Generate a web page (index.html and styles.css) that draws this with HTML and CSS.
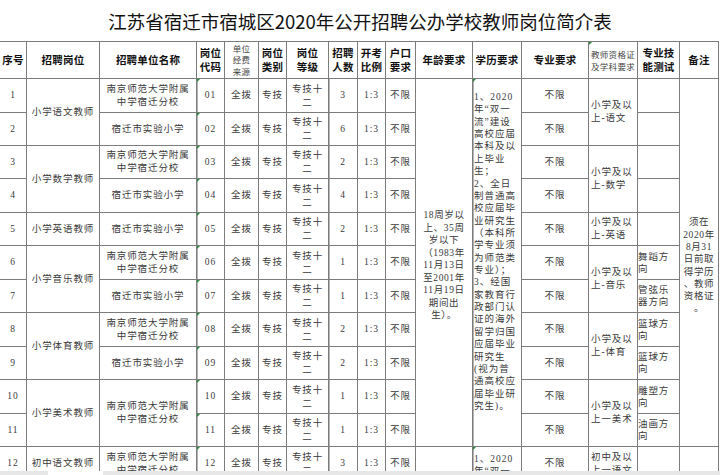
FILE: index.html
```html
<!DOCTYPE html>
<html lang="zh-CN">
<head>
<meta charset="utf-8">
<title>岗位简介表</title>
<link rel="stylesheet" href="styles.css">
</head>
<body>
<h1 class="title">江苏省宿迁市宿城区2020年公开招聘公办学校教师岗位简介表</h1>
<div class="sheet">
  <div class="c h">序号</div>
  <div class="c h">招聘岗位</div>
  <div class="c h">招聘单位名称</div>
  <div class="c h"><span>岗位<br>代码</span></div>
  <div class="c h sm"><span>单位<br>经费<br>来源</span></div>
  <div class="c h"><span>岗位<br>类别</span></div>
  <div class="c h"><span>岗位<br>等级</span></div>
  <div class="c h"><span>招聘<br>人数</span></div>
  <div class="c h"><span>开考<br>比例</span></div>
  <div class="c h"><span>户口<br>要求</span></div>
  <div class="c h">年龄要求</div>
  <div class="c h">学历要求</div>
  <div class="c h">专业要求</div>
  <div class="c h sm2 mk"><span>教师资格证<br>及学科要求</span></div>
  <div class="c h"><span>专业技<br>能测试</span></div>
  <div class="c h">备注</div>

  <!-- row 1 -->
  <div class="c">1</div>
  <div class="c r2">小学语文教师</div>
  <div class="c"><span>南京师范大学附属<br>中学宿迁分校</span></div>
  <div class="c tl mk">01</div>
  <div class="c">全拨</div>
  <div class="c">专技</div>
  <div class="c g"><span>专技十<br>二</span></div>
  <div class="c tl">3</div>
  <div class="c">1:3</div>
  <div class="c">不限</div>
  <div class="c r11 age"><span>18周岁以<br>上、35周<br>岁以下<br>（1983年<br>11月13日<br>至2001年<br>11月19日<br>期间出<br>生）。</span></div>
  <div class="c r11 tl mk edu"><span>1、2020<br>年“双一<br>流”建设<br>高校应届<br>本科及以<br>上毕业<br>生；<br>2、全日<br>制普通高<br>校应届毕<br>业研究生<br>（本科所<br>学专业须<br>为师范类<br>专业）；<br>3、经国<br>家教育行<br>政部门认<br>证的海外<br>留学归国<br>应届毕业<br>研究生<br>(视为普<br>通高校应<br>届毕业研<br>究生)。</span></div>
  <div class="c">不限</div>
  <div class="c r2 q"><span>小学及以<br>上-语文</span></div>
  <div class="c"></div>
  <div class="c r11 note"><span>须在<br>2020年<br>8月31<br>日前取<br>得学历<br>、教师<br>资格证<br>。</span></div>

  <!-- row 2 -->
  <div class="c">2</div>
  <div class="c">宿迁市实验小学</div>
  <div class="c tl mk">02</div>
  <div class="c">全拨</div>
  <div class="c">专技</div>
  <div class="c g"><span>专技十<br>二</span></div>
  <div class="c tl">6</div>
  <div class="c">1:3</div>
  <div class="c">不限</div>
  <div class="c">不限</div>
  <div class="c"></div>

  <!-- row 3 -->
  <div class="c">3</div>
  <div class="c r2">小学数学教师</div>
  <div class="c"><span>南京师范大学附属<br>中学宿迁分校</span></div>
  <div class="c tl mk">03</div>
  <div class="c">全拨</div>
  <div class="c">专技</div>
  <div class="c g"><span>专技十<br>二</span></div>
  <div class="c tl">2</div>
  <div class="c">1:3</div>
  <div class="c">不限</div>
  <div class="c">不限</div>
  <div class="c r2 q"><span>小学及以<br>上-数学</span></div>
  <div class="c"></div>

  <!-- row 4 -->
  <div class="c">4</div>
  <div class="c">宿迁市实验小学</div>
  <div class="c tl mk">04</div>
  <div class="c">全拨</div>
  <div class="c">专技</div>
  <div class="c g"><span>专技十<br>二</span></div>
  <div class="c tl">4</div>
  <div class="c">1:3</div>
  <div class="c">不限</div>
  <div class="c">不限</div>
  <div class="c"></div>

  <!-- row 5 -->
  <div class="c">5</div>
  <div class="c">小学英语教师</div>
  <div class="c">宿迁市实验小学</div>
  <div class="c tl mk">05</div>
  <div class="c">全拨</div>
  <div class="c">专技</div>
  <div class="c g"><span>专技十<br>二</span></div>
  <div class="c tl">2</div>
  <div class="c">1:3</div>
  <div class="c">不限</div>
  <div class="c">不限</div>
  <div class="c q"><span>小学及以<br>上-英语</span></div>
  <div class="c"></div>

  <!-- row 6 -->
  <div class="c">6</div>
  <div class="c r2">小学音乐教师</div>
  <div class="c"><span>南京师范大学附属<br>中学宿迁分校</span></div>
  <div class="c tl mk">06</div>
  <div class="c">全拨</div>
  <div class="c">专技</div>
  <div class="c g"><span>专技十<br>二</span></div>
  <div class="c tl">1</div>
  <div class="c">1:3</div>
  <div class="c">不限</div>
  <div class="c">不限</div>
  <div class="c r2 q"><span>小学及以<br>上-音乐</span></div>
  <div class="c sk"><span>舞蹈方<br>向</span></div>

  <!-- row 7 -->
  <div class="c">7</div>
  <div class="c">宿迁市实验小学</div>
  <div class="c tl mk">07</div>
  <div class="c">全拨</div>
  <div class="c">专技</div>
  <div class="c g"><span>专技十<br>二</span></div>
  <div class="c tl">1</div>
  <div class="c">1:3</div>
  <div class="c">不限</div>
  <div class="c">不限</div>
  <div class="c sk"><span>管弦乐<br>器方向</span></div>

  <!-- row 8 -->
  <div class="c">8</div>
  <div class="c r2">小学体育教师</div>
  <div class="c"><span>南京师范大学附属<br>中学宿迁分校</span></div>
  <div class="c tl mk">08</div>
  <div class="c">全拨</div>
  <div class="c">专技</div>
  <div class="c g"><span>专技十<br>二</span></div>
  <div class="c tl">2</div>
  <div class="c">1:3</div>
  <div class="c">不限</div>
  <div class="c">不限</div>
  <div class="c r2 q"><span>小学及以<br>上-体育</span></div>
  <div class="c sk"><span>篮球方<br>向</span></div>

  <!-- row 9 -->
  <div class="c">9</div>
  <div class="c">宿迁市实验小学</div>
  <div class="c tl mk">09</div>
  <div class="c">全拨</div>
  <div class="c">专技</div>
  <div class="c g"><span>专技十<br>二</span></div>
  <div class="c tl">2</div>
  <div class="c">1:3</div>
  <div class="c">不限</div>
  <div class="c">不限</div>
  <div class="c sk"><span>篮球方<br>向</span></div>

  <!-- row 10 -->
  <div class="c">10</div>
  <div class="c r2">小学美术教师</div>
  <div class="c r2"><span>南京师范大学附属<br>中学宿迁分校</span></div>
  <div class="c tl mk">10</div>
  <div class="c">全拨</div>
  <div class="c">专技</div>
  <div class="c g"><span>专技十<br>二</span></div>
  <div class="c tl">1</div>
  <div class="c">1:3</div>
  <div class="c">不限</div>
  <div class="c">不限</div>
  <div class="c r2 q"><span>小学及以<br>上一美术</span></div>
  <div class="c sk"><span>雕塑方<br>向</span></div>

  <!-- row 11 -->
  <div class="c">11</div>
  <div class="c tl mk">11</div>
  <div class="c">全拨</div>
  <div class="c">专技</div>
  <div class="c g"><span>专技十<br>二</span></div>
  <div class="c tl">1</div>
  <div class="c">1:3</div>
  <div class="c">不限</div>
  <div class="c">不限</div>
  <div class="c sk"><span>油画方<br>向</span></div>

  <!-- row 12 -->
  <div class="c">12</div>
  <div class="c">初中语文教师</div>
  <div class="c"><span>南京师范大学附属<br>中学宿迁分校</span></div>
  <div class="c tl mk">12</div>
  <div class="c">全拨</div>
  <div class="c">专技</div>
  <div class="c g"><span>专技十<br>二</span></div>
  <div class="c tl">3</div>
  <div class="c">1:3</div>
  <div class="c">不限</div>
  <div class="c"></div>
  <div class="c tl mk edu edu2"><span>1、2020<br>年“双一<br>流”建设</span></div>
  <div class="c">不限</div>
  <div class="c q"><span>初中及以<br>上一语文</span></div>
  <div class="c"></div>
  <div class="c"></div>
</div>
<div class="hbar"><span class="gapseg"></span></div>
</body>
</html>
```
FILE: styles.css
```css
html, body {
  margin: 0;
  padding: 0;
  background: #fff;
}

body {
  width: 720px;
  height: 475px;
  overflow: hidden;
  font-family: "Liberation Serif", "Noto Sans CJK SC", serif;
  color: #3a3a3a;
}

.title {
  margin: 0;
  height: 41px;
  line-height: 42px;
  text-align: center;
  font-family: "Noto Sans CJK SC", sans-serif;
  font-weight: 400;
  font-size: 18.5px;
  color: #111;
}

.sheet {
  display: grid;
  width: 718px;
  grid-template-columns: 26px 72px 96px 27px 33px 27px 41px 28px 27px 29px 56px 48px 66px 48px 41px 38px;
  grid-template-rows: 36px 33px 32px 32px 33px 32px 33px 32px 33px 32px 33px 32px 33px;
  gap: 1px;
  padding: 1px 1px 1px 0;
  background: #7c7c7c;
}

.c {
  position: relative;
  background: #fff;
  display: flex;
  align-items: center;
  justify-content: center;
  text-align: center;
  font-size: 9.5px;
  line-height: 13px;
  letter-spacing: 0.9px;
  white-space: nowrap;
  overflow: hidden;
}

.h {
  font-family: "Noto Sans CJK SC", sans-serif;
  font-weight: 700;
  font-size: 10.5px;
  line-height: 14px;
  letter-spacing: 0.2px;
  color: #111;
}

.h.sm {
  font-weight: 400;
  font-size: 8.5px;
  line-height: 11.5px;
  letter-spacing: 0.3px;
  color: #444;
}

.h.sm2 {
  font-weight: 400;
  font-size: 8.5px;
  line-height: 12px;
  letter-spacing: 0.3px;
  color: #444;
}

.r2 { grid-row: span 2; }
.r11 { grid-row: span 11; }

.g { line-height: 14px; }

.tl { box-shadow: inset 1px 0 0 #b4b4b4; }

.mk::before {
  content: "";
  position: absolute;
  left: 0;
  top: 0;
  border-top: 3px solid #2a8a3c;
  border-right: 3px solid transparent;
}

.age {
  line-height: 12.5px;
  letter-spacing: 0.6px;
  padding-top: 6px;
  box-sizing: border-box;
}

.note {
  line-height: 12.3px;
  letter-spacing: 0.6px;
  padding-top: 6px;
  box-sizing: border-box;
}

.edu {
  align-items: flex-start;
  justify-content: flex-start;
  text-align: left;
  line-height: 12.36px;
  letter-spacing: 1px;
  padding: 12px 0 0 1px;
  box-sizing: border-box;
}

.edu2 { padding-top: 6px; }

.q {
  justify-content: flex-start;
  text-align: left;
  padding-left: 2px;
  line-height: 13px;
}

.sk {
  justify-content: flex-start;
  text-align: left;
  padding-left: 0;
  line-height: 12px;
}

.hbar {
  position: fixed;
  left: 0;
  right: 0;
  bottom: 0;
  height: 4px;
  background: #e7e7e7;
}

.gapseg {
  position: absolute;
  left: 48px;
  width: 55px;
  top: 0;
  bottom: 0;
  background: #fff;
}
```
